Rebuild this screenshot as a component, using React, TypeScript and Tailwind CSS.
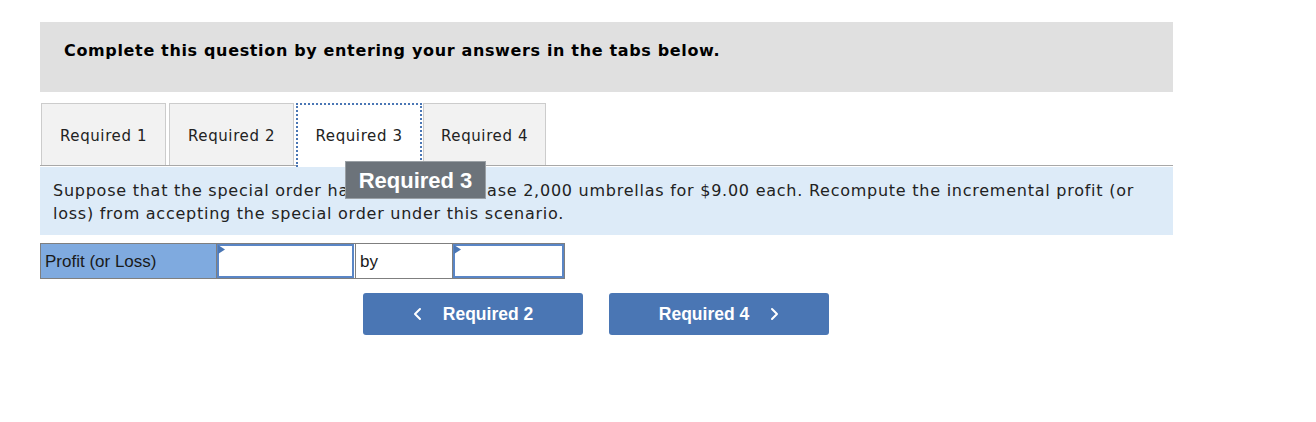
import React from "react";

const verdana = { fontFamily: '"DejaVu Sans", Verdana, sans-serif' };
const arial = { fontFamily: '"Liberation Sans", Arial, sans-serif' };

function Chevron({ dir }: { dir: "left" | "right" }) {
  return (
    <svg width="10" height="14" viewBox="0 0 10 14" className="shrink-0">
      <polyline
        points={dir === "left" ? "7,2 2,7 7,12" : "3,2 8,7 3,12"}
        fill="none"
        stroke="white"
        strokeWidth="2"
        strokeLinecap="round"
        strokeLinejoin="round"
      />
    </svg>
  );
}

function AnswerInput({ w }: { w: string }) {
  return (
    <div className={`relative h-full ${w} bg-white border-2 border-[#5a86c6]`}>
      <svg width="7" height="9" viewBox="0 0 7 9" className="absolute -left-[1px] -top-[1px]">
        <polygon points="0,0 7,4.5 0,9" fill="#4a76b4" />
      </svg>
    </div>
  );
}

export default function App() {
  return (
    <div className="relative w-[1316px] h-[422px] bg-white pt-[22px] pl-[40px]">
      <div className="w-[1133px]">
        <div className="h-[70px] bg-[#e0e0e0] pl-[24px] pt-[19px]">
          <p className="text-[16px] leading-[20px] font-bold text-black tracking-[0.65px]" style={verdana}>
            Complete this question by entering your answers in the tabs below.
          </p>
        </div>

        <div className="mt-[11px] flex h-[63px] border-b border-[#a8a8a8] pl-[1px] tracking-[0.6px]" style={verdana}>
          <div className="w-[125px] h-[62px] pt-[3px] flex items-center justify-center bg-[#f2f2f2] border border-[#cccccc] border-b-0 text-[15px] text-[#222]">
            Required 1
          </div>
          <div className="ml-[3px] w-[125px] h-[62px] pt-[3px] flex items-center justify-center bg-[#f2f2f2] border border-[#cccccc] border-b-0 text-[15px] text-[#222]">
            Required 2
          </div>
          <div className="ml-[2px] w-[126px] h-[64px] -mb-px flex items-center justify-center bg-white border-2 border-dotted border-[#4a76b4] border-b-0 text-[15px] text-[#222]">
            Required 3
          </div>
          <div className="ml-[1px] w-[123px] h-[62px] pt-[3px] flex items-center justify-center bg-[#f2f2f2] border border-[#cccccc] border-b-0 text-[15px] text-[#222]">
            Required 4
          </div>
        </div>

        <div className="mt-px h-[68px] bg-[#ddebf8] pl-[13px] pt-[12px] pr-[20px]">
          <p className="text-[16px] leading-[23px] text-[#222] tracking-[0.75px]" style={verdana}>
            Suppose that the special order had been to purchase 2,000 umbrellas for $9.00 each. Recompute the incremental profit (or loss) from accepting the special order under this scenario.
          </p>
        </div>

        <div className="mt-[8px] flex h-[36px] w-[525px] border border-[#7f7f7f]" style={arial}>
          <div className="w-[176px] h-full bg-[#7faadf] flex items-center pl-[4px] pt-[2px] text-[17px] text-[#1a1a1a] border-r border-[#7f7f7f]">
            Profit (or Loss)
          </div>
          <AnswerInput w="w-[137px]" />
          <div className="w-[98px] h-full flex items-center pl-[4px] pt-[2px] text-[17px] text-[#1a1a1a] border-l border-r border-[#7f7f7f] ml-px">
            by
          </div>
          <AnswerInput w="w-[111px]" />
        </div>

        <div className="mt-[14px] ml-[323px] flex gap-[26px]" style={arial}>
          <div className="w-[220px] h-[42px] rounded-[3px] bg-[#4a76b4] flex items-center justify-center gap-[20px] text-white text-[17.5px] font-bold">
            <Chevron dir="left" />
            <span>Required 2</span>
          </div>
          <div className="w-[220px] h-[42px] rounded-[3px] bg-[#4a76b4] flex items-center justify-center gap-[20px] text-white text-[17.5px] font-bold">
            <span>Required 4</span>
            <Chevron dir="right" />
          </div>
        </div>
      </div>

      <div
        className="absolute left-[345px] top-[161px] w-[141px] h-[38px] bg-[#6c737a] border border-[#9aa0a5] flex items-center justify-center text-white text-[22px] font-bold"
        style={arial}
      >
        Required 3
      </div>
    </div>
  );
}
